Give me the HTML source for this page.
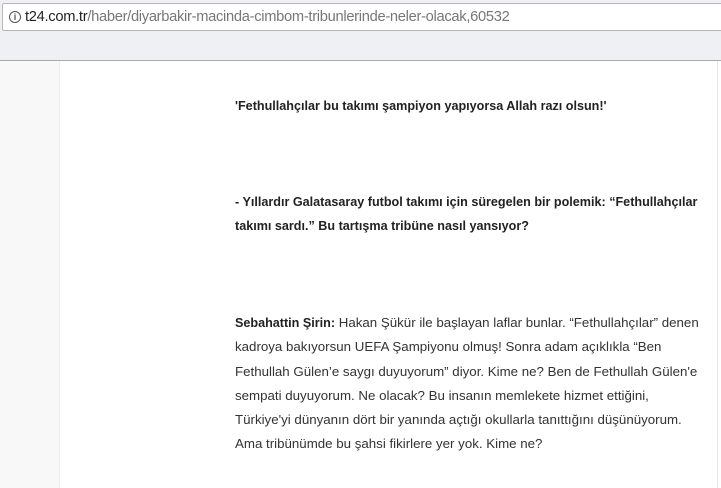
<!DOCTYPE html>
<html><head><meta charset="utf-8"><style>
body{margin:0;width:721px;height:488px;overflow:hidden;background:#fff;font-family:"Liberation Sans",sans-serif;position:relative}
.top{position:absolute;left:0;top:0;width:721px;height:60px;background:#eff0f3;border-bottom:1px solid #a9a9a9}
.addr{position:absolute;left:2px;top:3px;width:730px;height:26px;background:#fff;border:1px solid #b8b8b8;border-radius:2px;font-size:14.7px;line-height:26px;color:#777}
.addr .i{position:absolute;left:6px;top:7px;width:10px;height:10px;border:1px solid #555;border-radius:50%;font-size:9px;line-height:10px;text-align:center;color:#555;font-weight:bold}
.addr .u{position:absolute;left:22px;top:0;letter-spacing:-0.3px}
.addr b{font-weight:normal;color:#222}
.left{position:absolute;left:0;top:61px;width:59px;height:427px;background:#f8f8f8;border-right:1px solid #ececec}
.right{position:absolute;left:717px;top:61px;width:1px;height:427px;background:#e6e6e6}
.t{position:absolute;left:235px;font-size:13.3px;color:#333;line-height:24.3px;white-space:nowrap}
.t b{color:#222;font-size:12.6px}
</style></head><body>
<div class="top"><div class="addr"><span class="i">i</span><span class="u"><b>t24.com.tr</b>/haber/diyarbakir-macinda-cimbom-tribunlerinde-neler-olacak,60532</span></div></div>
<div class="left"></div><div class="right"></div>
<div class="t" style="top:94px"><b>'Fethullahçılar bu takımı şampiyon yapıyorsa Allah razı olsun!'</b></div>
<div class="t" style="top:190px"><b>- Yıllardır Galatasaray futbol takımı için süregelen bir polemik: “Fethullahçılar<br>takımı sardı.” Bu tartışma tribüne nasıl yansıyor?</b></div>
<div class="t" style="top:311px"><b>Sebahattin Şirin:</b> Hakan Şükür ile başlayan laflar bunlar. “Fethullahçılar” denen<br>kadroya bakıyorsun UEFA Şampiyonu olmuş! Sonra adam açıklıkla “Ben<br>Fethullah Gülen’e saygı duyuyorum” diyor. Kime ne? Ben de Fethullah Gülen'e<br>sempati duyuyorum. Ne olacak? Bu insanın memlekete hizmet ettiğini,<br>Türkiye'yi dünyanın dört bir yanında açtığı okullarla tanıttığını düşünüyorum.<br>Ama tribünümde bu şahsi fikirlere yer yok. Kime ne?</div>
</body></html>
